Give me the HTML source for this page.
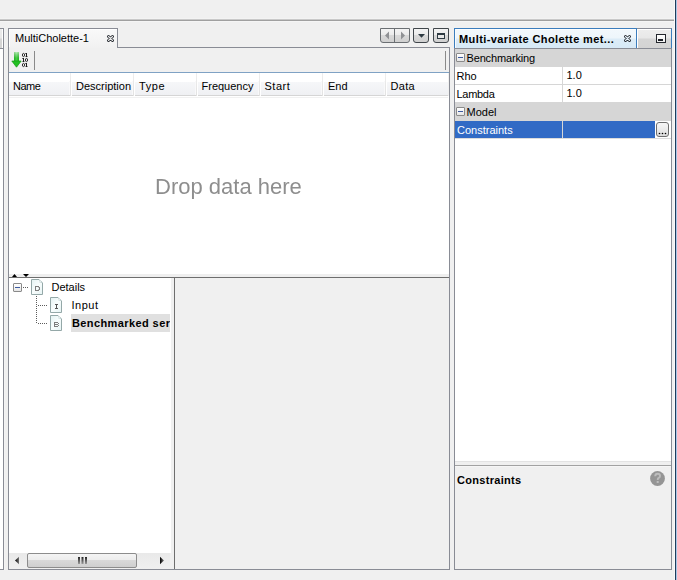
<!DOCTYPE html>
<html><head><meta charset="utf-8">
<style>
*{margin:0;padding:0;box-sizing:border-box}
html,body{width:677px;height:580px;overflow:hidden;background:#f0f0f0}
body{position:relative;font-family:"Liberation Sans",sans-serif;font-size:11px;color:#000}
.a{position:absolute}
.t{position:absolute;white-space:nowrap;line-height:13px;font-size:11px}
.b{font-weight:bold;-webkit-text-stroke:0}
.hl{position:absolute;height:1px}
.vl{position:absolute;width:1px}
</style></head><body>

<!-- top line -->
<div class="hl" style="left:0;top:20px;width:675px;background:#a0a0a0"></div>
<div class="hl" style="left:0;top:19px;width:675px;background:#c9c9c9"></div>
<div class="hl" style="left:0;top:18px;width:675px;background:#f3f3f3"></div>
<div class="hl" style="left:0;top:21px;width:675px;background:#f5f5f5"></div>
<!-- window edge -->
<div class="vl" style="left:675px;top:0;height:580px;background:#1f3c5b"></div>
<div class="vl" style="left:676px;top:0;height:580px;background:#a9c7e6"></div>
<div class="vl" style="left:674px;top:0;height:580px;background:#fafafa"></div>

<!-- left cut panel -->
<div class="a" style="left:0;top:29px;width:3px;height:19px;background:linear-gradient(#ebebeb 0,#e8e8e8 9px,#d6d6d6 10px,#d3d3d3 19px)"></div>
<div class="vl" style="left:2px;top:29px;height:19px;background:#fff"></div>
<div class="hl" style="left:0;top:28px;width:4px;background:#898c95"></div>
<div class="hl" style="left:0;top:48px;width:3px;background:#898c95"></div>
<div class="a" style="left:0;top:49px;width:3px;height:520px;background:#fff"></div>
<div class="vl" style="left:3px;top:28px;height:542px;background:#898c95"></div>
<div class="hl" style="left:0;top:569px;width:4px;background:#898c95"></div>
<div class="vl" style="left:4px;top:28px;height:542px;background:#f3f3f3"></div>

<!-- MAIN PANEL -->
<!-- tab -->
<div class="a" style="left:8px;top:28px;width:110px;height:20px;border:1px solid #898c95;border-bottom:none;background:linear-gradient(#f9f9f9,#f1f1f1)"></div>
<div class="hl" style="left:9px;top:29px;width:108px;background:#fff"></div>
<div class="vl" style="left:9px;top:29px;height:18px;background:#fff"></div>
<div class="t" id="tab1" style="left:15px;top:32px">MultiCholette-1</div>
<!-- close icon -->
<svg class="a" style="left:106px;top:34px" width="9" height="9" viewBox="0 0 9 9"><path d="M2.5 2.5 L6.5 6.5 M6.5 2.5 L2.5 6.5" fill="none" stroke="#2c3036" stroke-width="3" stroke-linecap="round"/><path d="M2.5 2.5 L6.5 6.5 M6.5 2.5 L2.5 6.5" fill="none" stroke="#e9e9e9" stroke-width="1.1" stroke-linecap="round"/></svg>

<!-- panel frame -->
<div class="hl" style="left:117px;top:47px;width:333px;background:#898c95"></div>
<div class="vl" style="left:449px;top:47px;height:523px;background:#898c95"></div>
<div class="hl" style="left:8px;top:569px;width:442px;background:#898c95"></div>
<div class="vl" style="left:8px;top:48px;height:522px;background:#898c95"></div>

<!-- tab row buttons -->
<div class="a" style="left:380px;top:28px;width:30px;height:15px;border:1px solid #6b6f73;border-radius:0 0 3px 3px;background:linear-gradient(#f3f3f3 0,#ebebeb 6px,#d9d9d9 6px,#d0d0d0 13px)"></div>
<div class="vl" style="left:394px;top:29px;height:13px;background:#6b6f73"></div>
<svg class="a" style="left:380px;top:28px" width="30" height="15"><path d="M5 7.5 L9 3.5 L9 11.5 Z M21 3.5 L25 7.5 L21 11.5 Z" fill="#8f9194"/></svg>
<div class="a" style="left:413px;top:28px;width:16px;height:15px;border:1px solid #40464b;border-radius:0 0 3px 3px;background:linear-gradient(#f3f3f3 0,#ebebeb 6px,#d9d9d9 6px,#d0d0d0 13px)"></div>
<svg class="a" style="left:413px;top:28px" width="16" height="15"><path d="M5 6 L12 6 L8.5 9.8 Z" fill="#2e3a42"/></svg>
<div class="a" style="left:433px;top:28px;width:16px;height:15px;border:1px solid #40464b;border-radius:0 0 3px 3px;background:linear-gradient(#f3f3f3 0,#ebebeb 6px,#d9d9d9 6px,#d0d0d0 13px)"></div>
<div class="a" style="left:437px;top:33px;width:8px;height:6px;border:1px solid #2e3a42;border-top-width:2px;background:#e8e8e8"></div>

<!-- toolbar -->
<div class="a" style="left:9px;top:48px;width:440px;height:24px;background:#f0f0f0"></div>
<svg class="a" style="left:10px;top:50px" width="20" height="20" viewBox="0 0 20 20">
 <defs><linearGradient id="gs" x1="0" y1="0" x2="0" y2="1"><stop offset="0" stop-color="#ffffff"/><stop offset="0.25" stop-color="#9fe09f"/><stop offset="0.6" stop-color="#2fbf2f"/><stop offset="1" stop-color="#18d018"/></linearGradient>
 <linearGradient id="gh" x1="0" y1="0" x2="1" y2="0"><stop offset="0" stop-color="#1a9e1a"/><stop offset="0.5" stop-color="#5fd85f"/><stop offset="1" stop-color="#1a9e1a"/></linearGradient></defs>
 <rect x="4" y="2" width="5" height="10" fill="url(#gs)"/>
 <rect x="4" y="2" width="5" height="10" fill="url(#gh)" opacity="0.45"/>
 <path d="M1.8 11 L11.2 11 L6.5 17.2 Z" fill="#22c022" stroke="#159a15" stroke-width="0.7" stroke-linejoin="round"/>
 <g fill="none" stroke="#1c1c1c" stroke-width="0.9">
  <ellipse cx="13.5" cy="5" rx="1.1" ry="1.6"/>
  <ellipse cx="16.5" cy="10" rx="1.1" ry="1.6"/>
  <ellipse cx="13.5" cy="15" rx="1.1" ry="1.6"/>
 </g>
 <g fill="#1c1c1c">
  <rect x="16" y="3" width="1" height="4"/><rect x="15.3" y="3" width="1" height="0.9"/><rect x="15.5" y="6.2" width="2" height="0.8"/>
  <rect x="13" y="8" width="1" height="4"/><rect x="12.3" y="8" width="1" height="0.9"/><rect x="12.5" y="11.2" width="2" height="0.8"/>
  <rect x="16" y="13" width="1" height="4"/><rect x="15.3" y="13" width="1" height="0.9"/><rect x="15.5" y="16.2" width="2" height="0.8"/>
 </g>
</svg>
<div class="vl" style="left:34px;top:51px;height:19px;background:#8a8a8a"></div>
<div class="vl" style="left:445px;top:51px;height:19px;background:#8a8a8a"></div>

<!-- table -->
<div class="hl" style="left:9px;top:72px;width:440px;background:#7fa2c4"></div>
<div class="a" style="left:9px;top:73px;width:439px;height:22px;background:linear-gradient(#ffffff 0,#ffffff 9px,#f6f7f9 9px,#eff0f3 22px)"></div>
<div class="hl" style="left:9px;top:95px;width:439px;background:#d5d5d5"></div>
<div class="vl" style="left:70px;top:73px;height:23px;background:linear-gradient(#eeeeee,#e2e2e2)"></div><div class="vl" style="left:71px;top:73px;height:23px;background:#fff"></div><div class="vl" style="left:69px;top:81px;height:14px;background:#f9f9fa"></div>
<div class="vl" style="left:133px;top:73px;height:23px;background:linear-gradient(#eeeeee,#e2e2e2)"></div><div class="vl" style="left:134px;top:73px;height:23px;background:#fff"></div><div class="vl" style="left:132px;top:81px;height:14px;background:#f9f9fa"></div>
<div class="vl" style="left:196px;top:73px;height:23px;background:linear-gradient(#eeeeee,#e2e2e2)"></div><div class="vl" style="left:197px;top:73px;height:23px;background:#fff"></div><div class="vl" style="left:195px;top:81px;height:14px;background:#f9f9fa"></div>
<div class="vl" style="left:259px;top:73px;height:23px;background:linear-gradient(#eeeeee,#e2e2e2)"></div><div class="vl" style="left:260px;top:73px;height:23px;background:#fff"></div><div class="vl" style="left:258px;top:81px;height:14px;background:#f9f9fa"></div>
<div class="vl" style="left:322px;top:73px;height:23px;background:linear-gradient(#eeeeee,#e2e2e2)"></div><div class="vl" style="left:323px;top:73px;height:23px;background:#fff"></div><div class="vl" style="left:321px;top:81px;height:14px;background:#f9f9fa"></div>
<div class="vl" style="left:385px;top:73px;height:23px;background:linear-gradient(#eeeeee,#e2e2e2)"></div><div class="vl" style="left:386px;top:73px;height:23px;background:#fff"></div><div class="vl" style="left:384px;top:81px;height:14px;background:#f9f9fa"></div>
<div class="t" style="left:13px;top:80px;letter-spacing:-0.5px">Name</div>
<div class="t" style="left:76px;top:80px">Description</div>
<div class="t" style="left:139px;top:80px;letter-spacing:0.6px">Type</div>
<div class="t" style="left:201.5px;top:80px">Frequency</div>
<div class="t" style="left:264.5px;top:80px;letter-spacing:0.5px">Start</div>
<div class="t" style="left:328px;top:80px">End</div>
<div class="t" style="left:390.5px;top:80px;letter-spacing:0.3px">Data</div>
<div class="a" style="left:9px;top:96px;width:440px;height:178px;background:#fff"></div>
<div class="hl" style="left:9px;top:97px;width:439px;background:#f1f1f1"></div>
<div class="t" style="left:155px;top:175px;font-size:22px;line-height:24px;color:#8e8e8e;will-change:transform">Drop data here</div>

<!-- splitter -->
<div class="a" style="left:9px;top:274px;width:440px;height:3px;background:#efefef"></div>
<div class="hl" style="left:9px;top:277px;width:440px;background:#6e6e6e"></div>
<svg class="a" style="left:9px;top:273px" width="30" height="5"><path d="M3 4 L5.5 1 L8 4 Z M14 1 L20 1 L17 4 Z" fill="#000"/></svg>

<!-- tree -->
<div class="a" style="left:9px;top:278px;width:162px;height:275px;background:#fff"></div>
<div class="a" style="left:171px;top:278px;width:3px;height:291px;background:#f0f0f0"></div>
<div class="vl" style="left:174px;top:278px;height:291px;background:#6e6e6e"></div>

<!-- scrollbar -->
<div class="a" style="left:9px;top:553px;width:161px;height:16px;background:linear-gradient(#e9e9e9,#f0f0f0)"></div>
<div class="a" style="left:27px;top:553px;width:110px;height:15px;border:1px solid #8c8c8c;border-radius:2px;background:linear-gradient(#f4f4f4 0,#ececec 6px,#d9d9d9 6px,#cfcfcf 13px)"></div>
<svg class="a" style="left:9px;top:553px" width="161" height="16">
 <defs><linearGradient id="ar" x1="0" y1="0" x2="1" y2="0"><stop offset="0" stop-color="#000"/><stop offset="1" stop-color="#777"/></linearGradient>
 <linearGradient id="gr" x1="0" y1="0" x2="0" y2="1"><stop offset="0" stop-color="#222"/><stop offset="1" stop-color="#9a9a9a"/></linearGradient></defs>
 <path d="M6 7.5 L10 3.8 L10 11.2 Z" fill="url(#ar)"/>
 <path d="M155 7.5 L151 3.8 L151 11.2 Z" fill="url(#ar)"/>
 <rect x="69" y="4" width="2" height="7" fill="url(#gr)"/>
 <rect x="72.5" y="4" width="2" height="7" fill="url(#gr)"/>
 <rect x="76" y="4" width="2" height="7" fill="url(#gr)"/>
</svg>


<!-- RIGHT PANEL -->
<div class="vl" style="left:454px;top:28px;height:542px;background:#898c95"></div>
<div class="vl" style="left:671px;top:48px;height:522px;background:#898c95"></div>
<div class="hl" style="left:454px;top:569px;width:218px;background:#898c95"></div>
<!-- active tab -->
<div class="a" style="left:454px;top:28px;width:183px;height:20px;border:1px solid #3b7dbd;border-bottom:none;background:linear-gradient(#f2f8fc 0,#eef6fb 9px,#dcecf7 10px,#d6e9f6 20px)"></div>
<div class="hl" style="left:455px;top:29px;width:181px;background:#fdfeff"></div>
<div class="vl" style="left:455px;top:29px;height:19px;background:#f8fbfd"></div>
<div class="t b" id="tab2" style="left:459px;top:33px;letter-spacing:0.4px">Multi-variate Cholette met...</div>
<svg class="a" style="left:623px;top:34px" width="9" height="9" viewBox="0 0 9 9"><path d="M2.5 2.5 L6.5 6.5 M6.5 2.5 L2.5 6.5" fill="none" stroke="#2c3036" stroke-width="3" stroke-linecap="round"/><path d="M2.5 2.5 L6.5 6.5 M6.5 2.5 L2.5 6.5" fill="none" stroke="#e4f0f8" stroke-width="1.1" stroke-linecap="round"/></svg>
<div class="a" style="left:637px;top:28px;width:35px;height:20px;border-top:1px solid #898c95;border-right:1px solid #3b7dbd;background:linear-gradient(#ededed 0,#e8e8e8 9px,#d6d6d6 10px,#d3d3d3 20px)"></div>
<div class="hl" style="left:637px;top:29px;width:34px;background:#fff"></div>
<div class="vl" style="left:637px;top:29px;height:19px;background:#fff"></div>
<div class="a" style="left:656px;top:34px;width:10px;height:9px;border:1px solid #23262d;background:linear-gradient(#fdfdfd,#f0f0f0)"></div>
<div class="a" style="left:658px;top:39px;width:5px;height:2px;background:#1e2128"></div>
<div class="hl" style="left:454px;top:48px;width:218px;background:#898c95"></div>

<!-- property sheet -->
<div class="a" style="left:455px;top:49px;width:216px;height:412px;background:#fff"></div>
<div class="a" style="left:455px;top:49px;width:216px;height:18px;background:#d6d6d6"></div>
<div class="hl" style="left:455px;top:84px;width:216px;background:#d6d6d6"></div>
<div class="a" style="left:455px;top:102px;width:216px;height:19px;background:#d6d6d6"></div>
<div class="vl" style="left:562px;top:67px;height:35px;background:#d6d6d6"></div>
<div class="a" style="left:455px;top:121px;width:200px;height:17px;background:#316ac5"></div>
<div class="vl" style="left:562px;top:121px;height:17px;background:#d6d6d6"></div>
<div class="hl" style="left:455px;top:138px;width:216px;background:#dcdcdc"></div>
<div class="a" style="left:456px;top:53px;width:9px;height:9px;border:1px solid #8a8a8a;border-radius:1px;background:linear-gradient(#fff,#e6e6e6)"></div>
<div class="hl" style="left:458px;top:57px;width:5px;background:#3c5aa0"></div>
<div class="a" style="left:456px;top:107px;width:9px;height:9px;border:1px solid #8a8a8a;border-radius:1px;background:linear-gradient(#fff,#e6e6e6)"></div>
<div class="hl" style="left:458px;top:111px;width:5px;background:#3c5aa0"></div>
<div class="t" style="left:466.5px;top:52px;letter-spacing:-0.15px">Benchmarking</div>
<div class="t" style="left:456.5px;top:70px">Rho</div>
<div class="t" style="left:566.5px;top:69px">1.0</div>
<div class="t" style="left:456.5px;top:88px;letter-spacing:-0.3px">Lambda</div>
<div class="t" style="left:566.5px;top:87px">1.0</div>
<div class="t" style="left:466.5px;top:106px">Model</div>
<div class="t" style="left:457px;top:124px;color:#fff">Constraints</div>
<div class="a" style="left:656px;top:122px;width:13px;height:15px;border:1px solid #6f6f6f;border-radius:3px;background:linear-gradient(#f6f6f6 0,#ececec 6px,#d8d8d8 14px)"></div>
<svg class="a" style="left:656px;top:122px" width="13" height="15"><circle cx="3.5" cy="11.5" r="0.8" fill="#000"/><circle cx="6.5" cy="11.5" r="0.8" fill="#000"/><circle cx="9.5" cy="11.5" r="0.8" fill="#000"/></svg>

<!-- help -->
<div class="a" style="left:455px;top:461px;width:216px;height:4px;background:#f0f0f0"></div>
<div class="hl" style="left:455px;top:461px;width:216px;background:#e3e3e3"></div>
<div class="hl" style="left:455px;top:465px;width:216px;background:#a2a2a2"></div>
<div class="hl" style="left:455px;top:466px;width:216px;background:#f6f6f6"></div>
<div class="t b" style="left:457px;top:474px;letter-spacing:0.3px">Constraints</div>
<svg class="a" style="left:649px;top:470px" width="17" height="17"><circle cx="8.5" cy="8.5" r="7.4" fill="#959595"/><path d="M6.2 6.3 Q6.2 3.8 8.7 3.8 Q11 3.8 11 5.9 Q11 7.2 9.7 7.9 Q8.7 8.4 8.7 10" fill="none" stroke="#bdbdbd" stroke-width="1.9"/><rect x="7.7" y="11" width="2" height="2" fill="#bdbdbd"/></svg>

<!-- tree contents -->
<div class="a" style="left:13px;top:283px;width:9px;height:9px;border:1px solid #8a8a8a;border-radius:1px;background:linear-gradient(#fff,#e6e6e6)"></div>
<div class="hl" style="left:15px;top:287px;width:5px;background:#3c5aa0"></div>
<svg class="a" style="left:0;top:0" width="60" height="340"><defs><linearGradient id="dg" x1="0" y1="0" x2="1" y2="1"><stop offset="0" stop-color="#e4f2f2"/><stop offset="0.5" stop-color="#f8fdfd"/><stop offset="1" stop-color="#e6f3f3"/></linearGradient></defs><g fill="#5c5c5c"><rect x="23" y="287" width="1" height="1"/><rect x="25" y="287" width="1" height="1"/><rect x="27" y="287" width="1" height="1"/><rect x="36" y="296" width="1" height="1"/><rect x="36" y="298" width="1" height="1"/><rect x="36" y="300" width="1" height="1"/><rect x="36" y="302" width="1" height="1"/><rect x="36" y="304" width="1" height="1"/><rect x="36" y="306" width="1" height="1"/><rect x="36" y="308" width="1" height="1"/><rect x="36" y="310" width="1" height="1"/><rect x="36" y="312" width="1" height="1"/><rect x="36" y="314" width="1" height="1"/><rect x="36" y="316" width="1" height="1"/><rect x="36" y="318" width="1" height="1"/><rect x="36" y="320" width="1" height="1"/><rect x="36" y="322" width="1" height="1"/><rect x="38" y="305" width="1" height="1"/><rect x="40" y="305" width="1" height="1"/><rect x="42" y="305" width="1" height="1"/><rect x="44" y="305" width="1" height="1"/><rect x="46" y="305" width="1" height="1"/><rect x="38" y="323" width="1" height="1"/><rect x="40" y="323" width="1" height="1"/><rect x="42" y="323" width="1" height="1"/><rect x="44" y="323" width="1" height="1"/><rect x="46" y="323" width="1" height="1"/></g></svg>
<svg class="a" style="left:31px;top:279px" width="12" height="16" viewBox="0 0 12 16">
 <path d="M0.5 0.5 L8 0.5 L11.5 4 L11.5 15.5 L0.5 15.5 Z" fill="url(#dg)" stroke="#94a8a8"/>
 <path d="M8.5 0.5 L11.5 3.5 L8.5 3.5 Z" fill="#b9cccc"/><rect x="8.6" y="1.6" width="1.2" height="1.2" fill="#fff"/>
 <g fill="#7c7c7c"><rect x="4" y="7" width="1" height="1"/><rect x="5" y="7" width="1" height="1"/><rect x="6" y="7" width="1" height="1"/><rect x="7" y="7" width="1" height="1"/><rect x="4" y="8" width="1" height="1"/><rect x="7" y="8" width="1" height="1" opacity="0.5"/><rect x="8" y="8" width="1" height="1"/><rect x="4" y="9" width="1" height="1"/><rect x="8" y="9" width="1" height="1"/><rect x="4" y="10" width="1" height="1"/><rect x="7" y="10" width="1" height="1" opacity="0.5"/><rect x="8" y="10" width="1" height="1"/><rect x="4" y="11" width="1" height="1"/><rect x="5" y="11" width="1" height="1"/><rect x="6" y="11" width="1" height="1"/><rect x="7" y="11" width="1" height="1"/></g>
</svg><svg class="a" style="left:50px;top:297px" width="12" height="16" viewBox="0 0 12 16">
 <path d="M0.5 0.5 L8 0.5 L11.5 4 L11.5 15.5 L0.5 15.5 Z" fill="url(#dg)" stroke="#94a8a8"/>
 <path d="M8.5 0.5 L11.5 3.5 L8.5 3.5 Z" fill="#b9cccc"/><rect x="8.6" y="1.6" width="1.2" height="1.2" fill="#fff"/>
 <g fill="#555"><rect x="5" y="7" width="1" height="1"/><rect x="6" y="7" width="1" height="1"/><rect x="7" y="7" width="1" height="1"/><rect x="6" y="8" width="1" height="1"/><rect x="6" y="9" width="1" height="1"/><rect x="6" y="10" width="1" height="1"/><rect x="5" y="11" width="1" height="1"/><rect x="6" y="11" width="1" height="1"/><rect x="7" y="11" width="1" height="1"/></g>
</svg><svg class="a" style="left:50px;top:315px" width="12" height="16" viewBox="0 0 12 16">
 <path d="M0.5 0.5 L8 0.5 L11.5 4 L11.5 15.5 L0.5 15.5 Z" fill="url(#dg)" stroke="#94a8a8"/>
 <path d="M8.5 0.5 L11.5 3.5 L8.5 3.5 Z" fill="#b9cccc"/><rect x="8.6" y="1.6" width="1.2" height="1.2" fill="#fff"/>
 <g fill="#7c7c7c"><rect x="4" y="7" width="1" height="1"/><rect x="5" y="7" width="1" height="1"/><rect x="6" y="7" width="1" height="1"/><rect x="7" y="7" width="1" height="1"/><rect x="4" y="8" width="1" height="1"/><rect x="8" y="8" width="1" height="1"/><rect x="4" y="9" width="1" height="1"/><rect x="5" y="9" width="1" height="1"/><rect x="6" y="9" width="1" height="1"/><rect x="7" y="9" width="1" height="1"/><rect x="4" y="10" width="1" height="1"/><rect x="8" y="10" width="1" height="1"/><rect x="4" y="11" width="1" height="1"/><rect x="5" y="11" width="1" height="1"/><rect x="6" y="11" width="1" height="1"/><rect x="7" y="11" width="1" height="1"/></g>
</svg>
<div class="t" style="left:51.5px;top:281px">Details</div>
<div class="t" style="left:71.5px;top:299px;letter-spacing:0.5px">Input</div>
<div class="a" style="left:71px;top:314px;width:99px;height:18px;background:#e0e0e0"></div>
<div class="a" style="left:71px;top:314px;width:99px;height:18px;overflow:hidden"><div class="t b" style="left:1px;top:3px;letter-spacing:0.4px">Benchmarked series</div></div>
</body></html>
